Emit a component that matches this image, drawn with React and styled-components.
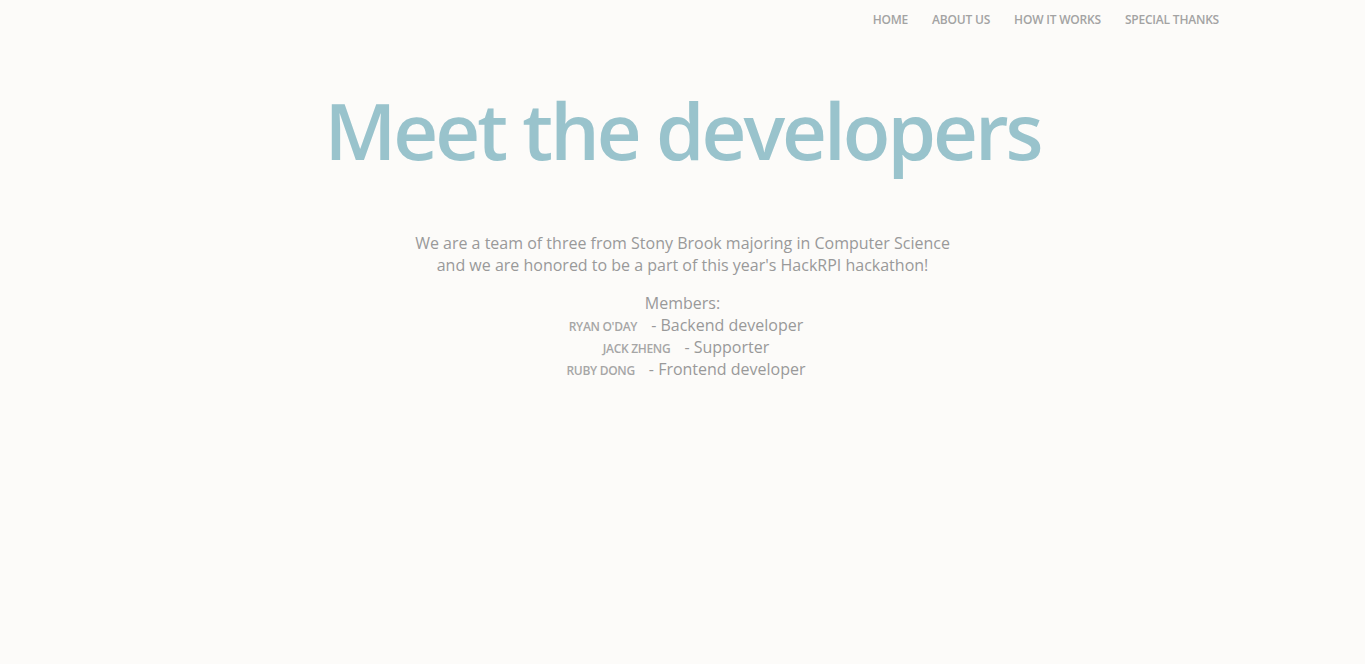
import React from 'react'
import styled, { createGlobalStyle } from 'styled-components'

const GlobalStyle = createGlobalStyle`
    body {
        margin: 0;
        background: #fcfbf9;
        font-family: "Open Sans", "Liberation Sans", sans-serif;
        color: #999;
    }
`

const Page = styled.div`
    min-height: 664px;
    display: flex;
    flex-direction: column;
    align-items: center;
`

const Nav = styled.nav`
    align-self: stretch;
    display: flex;
    justify-content: flex-end;
    gap: 24px;
    padding: 11px 146px 0 0;
    height: 29px;
`

const NavLink = styled.a`
    font-size: 12px;
    font-weight: 600;
    text-transform: uppercase;
    color: #a3a3a3;
    letter-spacing: -0.2px;
    line-height: 17px;
    text-decoration: none;
    cursor: pointer;
`

const Title = styled.h1`
    margin: 40px 0 0;
    font-size: 78px;
    font-weight: 600;
    line-height: 100px;
    color: #99c3cc;
    letter-spacing: -3px;
`

const Intro = styled.p`
    margin: 52px 0 0;
    font-size: 16px;
    line-height: 22px;
    text-align: center;
    color: #999;
`

const Members = styled.div`
    margin-top: 16px;
    display: flex;
    flex-direction: column;
    align-items: center;
    font-size: 16px;
    line-height: 22px;
    color: #999;
`

const MemberRow = styled.div`
    display: flex;
    align-items: baseline;
    gap: 14px;
    height: 22px;
    padding-left: 7px;
`

const Name = styled.span`
    font-size: 12px;
    font-weight: 600;
    line-height: 22px;
    text-transform: uppercase;
    color: #a6a6a6;
    letter-spacing: -0.3px;
`

const members = [
    { name: "Ryan O'Day", role: 'Backend developer' },
    { name: 'Jack Zheng', role: 'Supporter' },
    { name: 'Ruby Dong', role: 'Frontend developer' },
]

export default function App() {
    return (
        <Page>
            <GlobalStyle />
            <Nav>
                <NavLink>Home</NavLink>
                <NavLink>About us</NavLink>
                <NavLink>How it works</NavLink>
                <NavLink>Special thanks</NavLink>
            </Nav>
            <Title>Meet the developers</Title>
            <Intro>
                We are a team of three from Stony Brook majoring in Computer Science
                <br />
                and we are honored to be a part of this year's HackRPI hackathon!
            </Intro>
            <Members>
                <div>Members:</div>
                {members.map((m) => (
                    <MemberRow key={m.name}>
                        <Name>{m.name}</Name>
                        <span>- {m.role}</span>
                    </MemberRow>
                ))}
            </Members>
        </Page>
    )
}
